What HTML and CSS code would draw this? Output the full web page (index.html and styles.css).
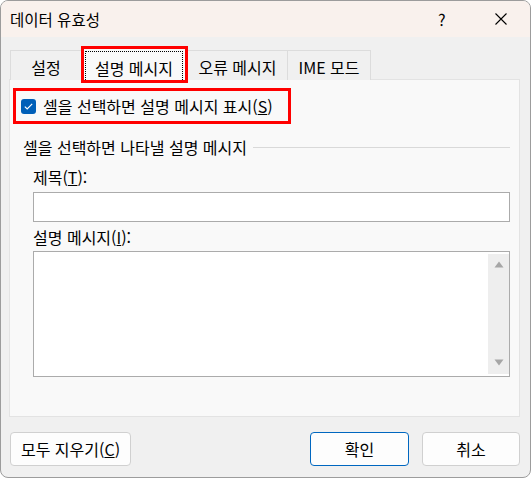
FILE: index.html
```html
<!DOCTYPE html>
<html lang="ko">
<head>
<meta charset="utf-8">
<title>데이터 유효성</title>
<link rel="stylesheet" href="styles.css">
</head>
<body>
<div class="window">
  <div class="titlebar">
    <span class="title">데이터 유효성</span>
    <span class="help">?</span>
    <span class="close"><svg width="12" height="12" viewBox="0 0 12 12"><path d="M0.5 0.5 L11.5 11.5 M11.5 0.5 L0.5 11.5" stroke="#000" stroke-width="1.1" fill="none"/></svg></span>
  </div>
  <div class="content">
    <div class="tabs">
      <div class="tab tab-first">설정</div>
      <div class="tab active"><span class="focus">설명 메시지</span></div>
      <div class="tab tab-error">오류 메시지</div>
      <div class="tab tab-ime">IME 모드</div>
    </div>
    <div class="panel">
      <div class="check-row">
        <span class="checkbox"><svg width="9" height="7" viewBox="0 0 9 7"><path d="M0.8 3.6 L3.2 5.9 L8.2 0.9" stroke="#fff" stroke-width="1.2" fill="none"/></svg></span>
        <span class="check-text">셀을 선택하면 설명 메시지 표시(<u>S</u>)</span>
      </div>
      <div class="group-label"><span>셀을 선택하면 나타낼 설명 메시지</span><span class="rule"></span></div>
      <div class="field-label">제목(<u>T</u>):</div>
      <div class="input"></div>
      <div class="field-label field-label-2">설명 메시지(<u>I</u>):</div>
      <div class="textarea">
        <div class="scrollbar">
          <svg width="10" height="7" viewBox="0 0 10 7"><path d="M5 0.5 L9.5 6.5 L0.5 6.5 Z" fill="#a6a6a6"/></svg>
          <svg width="10" height="7" viewBox="0 0 10 7"><path d="M0.5 0.5 L9.5 0.5 L5 6.5 Z" fill="#a6a6a6"/></svg>
        </div>
      </div>
    </div>
    <div class="buttons">
      <button class="btn btn-clear">모두 지우기(<u>C</u>)</button>
      <span class="spacer"></span>
      <button class="btn btn-ok">확인</button>
      <button class="btn btn-cancel">취소</button>
    </div>
  </div>
</div>
</body>
</html>
```
FILE: styles.css
```css
* { box-sizing: border-box; }
html, body { margin: 0; padding: 0; }
body {
  background: #ffffff;
  font-family: "Noto Sans CJK KR", "Noto Sans", sans-serif;
  font-size: 16px;
  color: #000;
}
.window {
  width: 531px;
  height: 478px;
  border: 1px solid #9c9c9c;
  border-radius: 8px;
  background: #f0f0f0;
  overflow: hidden;
  display: flex;
  flex-direction: column;
}
.titlebar {
  height: 36px;
  background: #f9f1ed;
  display: flex;
  align-items: center;
  padding-left: 9px;
  flex: none;
}
.title { font-size: 15.5px; line-height: 20px; }
.help { margin-left: auto; font-size: 16px; line-height: 20px; width: 10px; }
.close { margin-left: 47px; margin-right: 23px; display: flex; }
.content {
  padding: 0 10px 0 8px;
  display: flex;
  flex-direction: column;
}
.tabs {
  margin-top: 13px;
  margin-left: 1px;
  height: 30px;
  display: flex;
  align-items: flex-end;
  position: relative;
  z-index: 1;
  margin-bottom: -1px;
}
.tab {
  height: 30px;
  border: 1px solid #dcdcdc;
  border-bottom: none;
  background: #f0f0f0;
  display: flex;
  justify-content: center;
  padding-top: 3px;
  align-items: center;
  line-height: 20px;
  font-size: 16px;
}
.tab-first { width: 71px; border-right: none; }
.tab-error { width: 100px; border-left: none; }
.tab-ime { width: 83px; border-left: none; }
.active {
  width: 101px;
  height: 31px;
  margin: 0 3px;
  background: #f9f9f9;
  border: none;
  outline: 3px solid #ff0000;
  padding: 2px 2px 0 1px;
  align-items: stretch;
}
.focus {
  flex: 1;
  border: 1px dotted #000;
  border-bottom: none;
  display: flex;
  align-items: center;
  justify-content: center;
  padding-top: 3px;
}
.panel {
  height: 338px;
  background: #f9f9f9;
  border: 1px solid #e3e3e3;
  display: flex;
  flex-direction: column;
  align-items: flex-start;
}
.check-row {
  margin: 8px 0 0 3px;
  width: 278px;
  height: 36px;
  border: 3px solid #ff0000;
  display: flex;
  align-items: center;
  padding-left: 5px;
}
.checkbox {
  width: 15px;
  height: 15px;
  border-radius: 3px;
  background: #005fb8;
  display: flex;
  align-items: center;
  justify-content: center;
  margin-top: 1px;
}
.check-text { margin-left: 7px; line-height: 20px; }
.group-label {
  margin: 13px 0 0 13px;
  width: 487px;
  display: flex;
  align-items: center;
  line-height: 20px;
}
.rule { flex: 1; height: 1px; background: #d9d9d9; margin-left: 6px; margin-top: 1px; }
.field-label { margin: 10px 0 0 23px; line-height: 20px; }
.field-label-2 { margin-top: 5px; }
.input {
  margin: 5px 0 0 23px;
  width: 477px;
  height: 30px;
  background: #fff;
  border: 1px solid #ababab;
}
.textarea {
  margin: 4px 0 0 23px;
  width: 477px;
  height: 126px;
  background: #fff;
  border: 1px solid #ababab;
  display: flex;
  justify-content: flex-end;
  padding: 2px 0;
}
.scrollbar {
  width: 21px;
  background: #eeeeee;
  display: flex;
  flex-direction: column;
  justify-content: space-between;
  align-items: center;
  padding: 7px 0 8px;
}
.scrollbar svg { display: block; }
.buttons {
  margin-top: 15px;
  display: flex;
  height: 34px;
  gap: 13px;
  margin-left: 1px;
}
.spacer { flex: 1; }
.btn {
  font-family: inherit;
  font-size: 16px;
  color: #000;
  background: #fdfdfd;
  border: 1px solid #d0d0d0;
  border-radius: 4px;
  height: 34px;
  padding: 0;
  line-height: 20px;
}
.btn-clear { width: 121px; }
.btn-ok { width: 99px; border-color: #0067c0; }
.btn-cancel { width: 98px; }
```
